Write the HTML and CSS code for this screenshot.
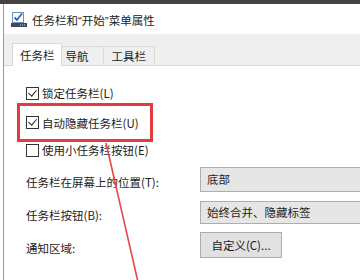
FILE: index.html
```html
<!DOCTYPE html>
<html>
<head>
<meta charset="utf-8">
<link rel="stylesheet" href="styles.css">
</head>
<body>
<div class="topbar"></div>
<div class="window">
  <div class="titlebar">
    <svg class="appicon" width="16" height="17" viewBox="0 0 16 17">
      <rect x="1.5" y="1.5" width="11" height="10" fill="#fff" stroke="#6d8fb8"/>
      <path d="M3.5 6.5 L6 9 L11 2.5" fill="none" stroke="#2a63b8" stroke-width="1.8"/>
      <rect x="0" y="12" width="16" height="4" fill="#3d4a5c"/>
      <rect x="9" y="13.5" width="1" height="1" fill="#cfd8e3"/>
      <rect x="11" y="13.5" width="1" height="1" fill="#cfd8e3"/>
      <rect x="13" y="13.5" width="1" height="1" fill="#cfd8e3"/>
    </svg>
    <span class="title">任务栏和<span class="q">“</span>开始<span class="q">”</span>菜单属性</span>
  </div>
  <div class="tabstrip">
    <div class="tab active">任务栏</div>
    <div class="tab">导航</div>
    <div class="tab">工具栏</div>
  </div>
  <div class="content">
    <div class="check-row first">
      <span class="cb checked"></span><span>锁定任务栏(L)</span>
    </div>
    <div class="highlight">
      <div class="check-row">
        <span class="cb checked"></span><span>自动隐藏任务栏(U)</span>
      </div>
    </div>
    <div class="check-row">
      <span class="cb"></span><span>使用小任务栏按钮(E)</span>
    </div>
    <div class="form">
      <span class="label">任务栏在屏幕上的位置(T):</span>
      <div class="select">底部</div>
      <span class="label">任务栏按钮(B):</span>
      <div class="select s2">始终合并、隐藏标签</div>
      <span class="label">通知区域:</span>
      <div><button class="btn">自定义(C)...</button></div>
    </div>
  </div>
  <svg class="arrow" width="360" height="280" viewBox="0 0 360 280">
    <line x1="106" y1="143" x2="138" y2="282" stroke="#e8474a" stroke-width="1.6"/>
  </svg>
</div>
</body>
</html>
```

FILE: styles.css
```css
html, body {
  margin: 0;
  padding: 0;
  width: 360px;
  height: 280px;
  overflow: hidden;
  background: #fff;
  font-family: "Noto Sans CJK SC", "Noto Sans", sans-serif;
  font-size: 11.5px;
  color: #1c1c1c;
}
.topbar {
  height: 4px;
  background: #434343;
}
.window {
  margin-left: 3px;
  border-left: 1px solid #8c9db2;
  height: 276px;
}
.titlebar {
  height: 30px;
  display: flex;
  align-items: center;
  padding-left: 7px;
  gap: 5px;
  background: #fff;
}
.appicon {
  display: block;
  margin-top: 1px;
}
.title {
  font-size: 11.5px;
  color: #222;
  margin-top: 1px;
}
.q {
  font-family: "Liberation Sans", sans-serif;
}
.tabstrip {
  height: 31px;
  background: #efefef;
  border-bottom: 1px solid #d9d9d9;
  display: flex;
  align-items: flex-end;
  padding-left: 8px;
}
.tab {
  height: 18px;
  line-height: 18px;
  padding: 0 14px 0 4px;
  border: 1px solid #dadada;
  border-bottom: none;
  border-left: none;
}
.tab.active {
  height: 22px;
  line-height: 22px;
  background: #fff;
  border-left: 1px solid #d6d6d6;
  padding: 0 6px 0 7px;
  margin-bottom: -1px;
}
.tab:nth-child(3) {
  padding: 0 8px 0 8px;
}
.content {
  position: relative;
  padding: 17px 0 0 22px;
}
.check-row {
  display: flex;
  align-items: center;
  gap: 3px;
  height: 20px;
}
.highlight + .check-row {
  height: 16px;
}
.cb {
  width: 11px;
  height: 11px;
  border: 1px solid #333;
  background: #fff;
  position: relative;
  flex: none;
}
.cb.checked::after {
  content: "";
  position: absolute;
  left: 3px;
  top: 0px;
  width: 4px;
  height: 7px;
  border: solid #222;
  border-width: 0 1.5px 1.5px 0;
  transform: rotate(40deg);
}
.highlight {
  margin-left: -9px;
  width: 124px;
  height: 33px;
  border: 3px solid #e63a3f;
  padding-left: 6px;
  display: flex;
  align-items: center;
}
.form {
  margin-top: 9px;
  display: grid;
  grid-template-columns: 174px 180px;
  row-gap: 9px;
  align-items: center;
}
.label {
  padding-top: 5px;
}
.select {
  line-height: 23px;
  border: 1px solid #adadad;
  background: #e6e6e6;
  padding-left: 6px;
  box-sizing: border-box;
  height: 25px;
}
.select.s2 {
  height: 23px;
  line-height: 21px;
}
.form > div:last-child {
  margin-top: -1px;
}
.btn {
  font-family: inherit;
  font-size: 11.5px;
  color: #1c1c1c;
  width: 82px;
  height: 26px;
  border: 1px solid #adadad;
  background: #e1e1e1;
  padding: 0;
  display: block;
}
.arrow {
  position: absolute;
  left: 0;
  top: 0;
  pointer-events: none;
}
```
